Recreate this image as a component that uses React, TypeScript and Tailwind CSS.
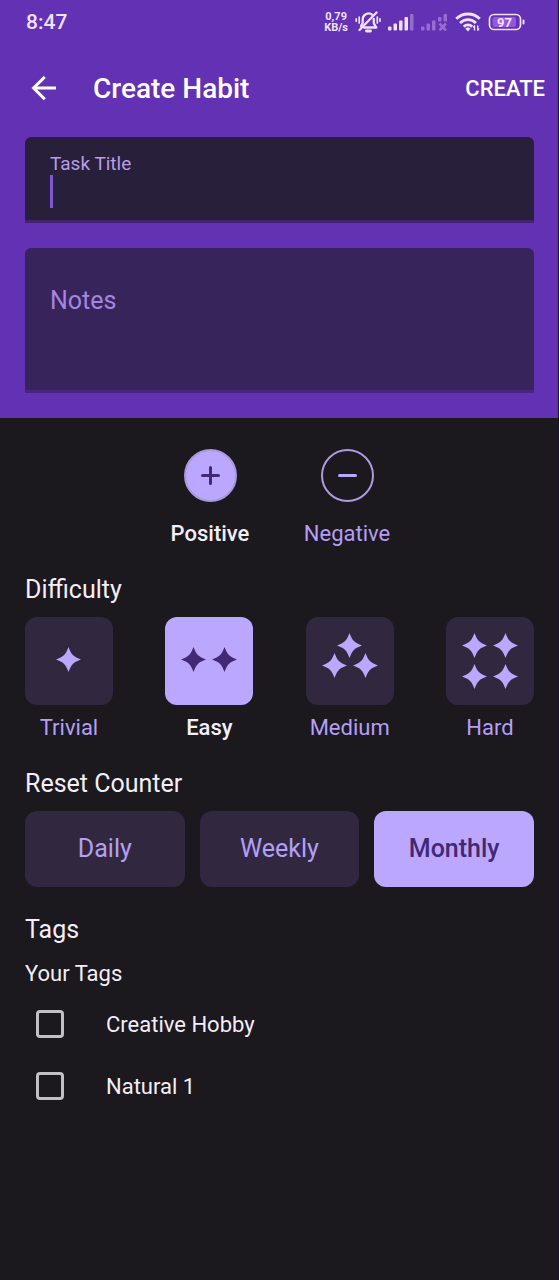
import { useState } from "react";

const STAR =
  "M12.5 0C13.700 3.200 15 6.300 16.900 8.100C18.700 10 21.800 11.300 25 12.500C21.800 13.700 18.700 15 16.900 16.900C15 18.700 13.700 21.800 12.500 25C11.300 21.800 10 18.700 8.100 16.900C6.300 15 3.200 13.700 0 12.500C3.200 11.300 6.300 10 8.100 8.100C10 6.300 11.300 3.200 12.500 0Z";

const difficulties = [
  { name: "Trivial", stars: [[31, 30]] },
  { name: "Easy", stars: [[16, 30], [47, 30]] },
  { name: "Medium", stars: [[31, 16], [16, 36], [47, 36]] },
  { name: "Hard", stars: [[16, 16], [47, 16], [16, 47], [47, 47]] },
];

const periods = ["Daily", "Weekly", "Monthly"];
const tags = ["Creative Hobby", "Natural 1"];

function StatusBar() {
  return (
    <div className="flex h-11 items-center justify-between pr-[33px] pl-[26px] text-[#f0e2ff]">
      <span className="text-[21px] leading-6 font-medium">8:47</span>
      <div className="flex items-center gap-[7px]">
        <div className="text-center text-[11px] leading-[11px] font-bold">
          <div>0,79</div>
          <div>KB/s</div>
        </div>
        <svg className="h-[22px] w-[26px]" viewBox="0 0 26 22" fill="none" stroke="currentColor" strokeWidth="2.300" strokeLinecap="round">
          <path d="M17 3.600C15.500 2.300 12.800 2.200 10.800 3.200C8.700 4.200 7.700 6.300 7.700 8.500V12L6 15" />
          <path d="M18.800 8V12.300L21.300 16.500H9" strokeLinejoin="round" />
          <path d="M21.500 1.500L4.500 19" />
          <path d="M11.500 20H15.500" strokeWidth="2.800" />
          <path d="M1.200 7.800V10.200M4.200 6V12M22.300 6V12M25 7.800V10.200" strokeWidth="1.700" />
        </svg>
        <svg className="h-[18px] w-[26px]" viewBox="0 0 26 18" fill="currentColor">
          <rect x="0" y="13.500" width="3.500" height="4" rx="1" />
          <rect x="5.500" y="10.500" width="3.500" height="7" rx="1" />
          <rect x="11" y="7.500" width="3.500" height="10" rx="1" />
          <rect x="16.500" y="4" width="3.500" height="13.500" rx="1" />
          <rect x="22" y="1" width="3.500" height="16.500" rx="1" opacity="0.35" />
        </svg>
        <svg className="h-[18px] w-[27px] opacity-35" viewBox="0 0 27 18" fill="currentColor">
          <rect x="0" y="13.500" width="3.500" height="4" rx="1" />
          <rect x="5.500" y="10.500" width="3.500" height="7" rx="1" />
          <rect x="11" y="7.500" width="3.500" height="10" rx="1" />
          <rect x="17" y="4" width="3.500" height="4.500" rx="1" />
          <rect x="22.500" y="1" width="3.500" height="7.500" rx="1" />
          <path d="M18.500 10.500L25 17.500M25 10.500L18.500 17.500" stroke="currentColor" strokeWidth="2.600" />
        </svg>
        <svg className="h-5 w-[26px]" viewBox="0 0 26 20" fill="none" stroke="currentColor" strokeWidth="2.800">
          <path d="M1.200 6.800C8 .4 18 .4 24.800 6.800" />
          <path d="M5 11C9.500 6.500 16.500 6.500 21 11" />
          <path d="M8.800 14.800C11.200 12.300 14.800 12.300 17.200 14.800" />
          <path d="M10.300 16.500L13 19.500L15.500 16.500L13 15.300Z" fill="currentColor" stroke="none" />
          <path d="M19.500 18.500V13.500M22.800 13.500V18.500" strokeWidth="1.400" />
          <path d="M17.500 15.500L19.500 12.800L20.200 15.500ZM22.200 16.500H24.800L22.800 19.300Z" fill="currentColor" stroke="none" />
        </svg>
        <svg className="h-[18px] w-[37px]" viewBox="0 0 37 18">
          <rect x="1.500" y="1.500" width="31" height="15" rx="4.500" fill="none" stroke="currentColor" strokeWidth="1.700" />
          <rect x="4.500" y="4" width="23.500" height="10" rx="2" fill="#9158dd" />
          <rect x="34.500" y="6.500" width="2" height="5" rx="1" fill="currentColor" />
          <text x="16.500" y="13.700" textAnchor="middle" fontSize="13" fontWeight="700" fill="currentColor">97</text>
        </svg>
      </div>
    </div>
  );
}

export default function App() {
  const [positive, setPositive] = useState(true);
  const [difficulty, setDifficulty] = useState("Easy");
  const [period, setPeriod] = useState("Monthly");

  return (
    <div className="min-h-screen border-r border-[#1a1325] bg-[#1b181e] font-[Roboto,sans-serif] text-[#f3eef8]">
      <header className="bg-[#6331b4] pb-[25px]">
        <StatusBar />
        <div className="flex h-[93px] items-center pr-[13px] pb-1 pl-[31px]">
          <button aria-label="Back" className="text-white">
            <svg className="h-[26px] w-[26px]" viewBox="0 0 26 26" fill="none" stroke="currentColor" strokeWidth="3">
              <path d="M25 12H3M13.800 1L2.600 12L13.800 23.200" />
            </svg>
          </button>
          <h1 className="ml-9 flex-1 text-[28px] leading-8 font-medium text-white">Create Habit</h1>
          <button className="text-[22px] leading-7 font-medium text-white">CREATE</button>
        </div>
        <div className="mr-6 ml-[25px] flex flex-col gap-[25px]">
          <div className="h-[86px] rounded-t-md border-b-[3px] border-[#42246f] bg-[#281f3a] px-[25px] pt-4">
            <label htmlFor="title" className="block text-[19px] leading-[22px] text-[#b99de6]">Task Title</label>
            <div className="flex h-[33px] items-center">
              <span className="h-full w-[3px] bg-[#7f56d3]" />
              <input id="title" className="min-w-0 flex-1 bg-transparent text-[25px] leading-8 outline-none" />
            </div>
          </div>
          <textarea
            aria-label="Notes"
            placeholder="Notes"
            className="block h-[145px] w-full resize-none rounded-t-md border-b-[3px] border-[#482582] bg-[#36245a] px-[25px] pt-[37px] text-[25px] leading-8 outline-none placeholder:text-[#a585e0]"
          />
        </div>
      </header>

      <main className="pt-[31px] pr-6 pl-[25px]">
        <div className="flex justify-center pr-0.5">
          {["Positive", "Negative"].map((name) => {
            const active = (name === "Positive") === positive;
            return (
              <button
                key={name}
                aria-pressed={active}
                onClick={() => setPositive(name === "Positive")}
                className="flex w-[137px] flex-col items-center gap-[18px]"
              >
                <span
                  className={
                    active
                      ? "flex h-[53px] w-[53px] items-center justify-center rounded-full border-2 border-[#aa97dc] bg-[#bba7fd] text-[#432874]"
                      : "flex h-[53px] w-[53px] items-center justify-center rounded-full border-2 border-[#ad9ae6] text-[#bba7fd]"
                  }
                >
                  <svg className="h-[19px] w-[19px]" viewBox="0 0 19 19" fill="none" stroke="currentColor" strokeWidth="3" strokeLinecap="round">
                    <path d={name === "Positive" ? "M1.500 9.500H17.500M9.500 1.500V17.500" : "M1.500 9.500H17.500"} />
                  </svg>
                </span>
                <span className={active ? "text-[22px] leading-7 font-medium" : "text-[22px] leading-7 text-[#b49ff5]"}>{name}</span>
              </button>
            );
          })}
        </div>

        <section className="mt-[26px]">
          <h2 className="text-[25px] leading-8">Difficulty</h2>
          <div className="mt-[11px] flex justify-between">
            {difficulties.map(({ name, stars }) => {
              const active = name === difficulty;
              return (
                <button key={name} aria-pressed={active} onClick={() => setDifficulty(name)} className="flex w-[88px] flex-col items-center gap-[9px]">
                  <span
                    className={
                      active
                        ? "h-[88px] w-full rounded-xl bg-[#bba7fd] text-[#432874]"
                        : "h-[88px] w-full rounded-xl bg-[#31283f] text-[#bba7fd]"
                    }
                  >
                    <svg className="h-full w-full" viewBox="0 0 88 88" fill="currentColor">
                      {stars.map(([x, y]) => (
                        <path key={`${x}-${y}`} d={STAR} transform={`translate(${x} ${y})`} />
                      ))}
                    </svg>
                  </span>
                  <span className={active ? "text-[22px] leading-7 font-medium" : "text-[22px] leading-7 text-[#b49ff5]"}>{name}</span>
                </button>
              );
            })}
          </div>
        </section>

        <section className="mt-[26px]">
          <h2 className="text-[25px] leading-8">Reset Counter</h2>
          <div className="mt-[11px] grid grid-cols-3 gap-[15px]">
            {periods.map((name) => (
              <button
                key={name}
                aria-pressed={name === period}
                onClick={() => setPeriod(name)}
                className={
                  name === period
                    ? "h-[76px] rounded-xl bg-[#bba7fd] text-[25px] leading-8 font-medium text-[#432874]"
                    : "h-[76px] rounded-xl bg-[#31283f] text-[25px] leading-8 text-[#b49ff5]"
                }
              >
                {name}
              </button>
            ))}
          </div>
        </section>

        <section className="mt-[27px]">
          <h2 className="text-[25px] leading-8">Tags</h2>
          <h3 className="mt-[14px] text-[22px] leading-7">Your Tags</h3>
          <div className="mt-[5px]">
            {tags.map((tag) => (
              <label key={tag} className="flex h-[62px] items-center gap-[42px] pl-[11px] text-[22px] leading-7">
                <input type="checkbox" className="h-7 w-7 appearance-none rounded-sm border-[3px] border-[#c3bfc7] checked:bg-[#bba7fd]" />
                <span className="pt-0.5">{tag}</span>
              </label>
            ))}
          </div>
        </section>
      </main>
    </div>
  );
}
